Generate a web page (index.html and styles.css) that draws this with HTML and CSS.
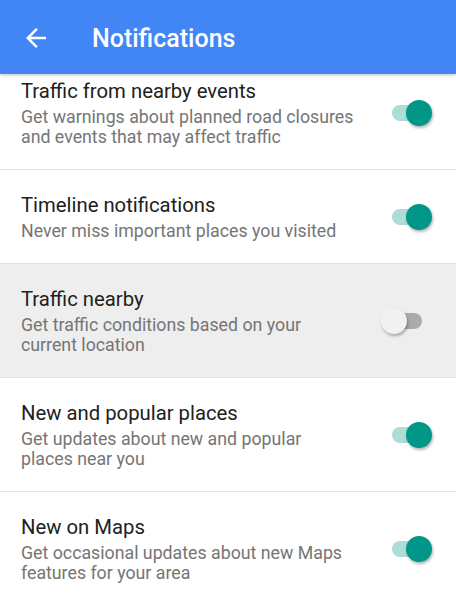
FILE: index.html
```html
<!DOCTYPE html>
<html>
<head>
<meta charset="utf-8">
<link rel="stylesheet" href="styles.css">
</head>
<body>
<header class="appbar">
  <svg class="back" viewBox="0 0 24 24" width="30" height="30"><path fill="#fff" d="M20 11H7.83l5.59-5.59L12 4l-8 8 8 8 1.41-1.41L7.83 13H20v-2z"/></svg>
  <h1 class="title">Notifications</h1>
</header>
<main class="list">
  <div class="row">
    <div class="text">
      <div class="name">Traffic from nearby events</div>
      <div class="desc">Get warnings about planned road closures and events that may affect traffic</div>
    </div>
    <div class="switch on"><span class="track"></span><span class="thumb"></span></div>
  </div>
  <div class="row">
    <div class="text">
      <div class="name">Timeline notifications</div>
      <div class="desc">Never miss important places you visited</div>
    </div>
    <div class="switch on"><span class="track"></span><span class="thumb"></span></div>
  </div>
  <div class="row pressed">
    <div class="text">
      <div class="name">Traffic nearby</div>
      <div class="desc">Get traffic conditions based on your current location</div>
    </div>
    <div class="switch off"><span class="track"></span><span class="thumb"></span></div>
  </div>
  <div class="row">
    <div class="text">
      <div class="name">New and popular places</div>
      <div class="desc">Get updates about new and popular places near you</div>
    </div>
    <div class="switch on"><span class="track"></span><span class="thumb"></span></div>
  </div>
  <div class="row">
    <div class="text">
      <div class="name">New on Maps</div>
      <div class="desc">Get occasional updates about new Maps features for your area</div>
    </div>
    <div class="switch on"><span class="track"></span><span class="thumb"></span></div>
  </div>
</main>
</body>
</html>
```
FILE: styles.css
```css
html, body {
  margin: 0;
  padding: 0;
  background: #ffffff;
  font-family: Roboto, "Noto Sans", sans-serif;
  overflow: hidden;
}
.appbar {
  position: relative;
  z-index: 2;
  height: 74px;
  background: #4285f4;
  display: flex;
  align-items: center;
  box-shadow: 0 1px 3px rgba(0,0,0,0.25);
}
.back {
  display: block;
  margin-left: 21px;
  margin-top: 1px;
}
.title {
  margin: 0 0 0 41px;
  color: #ffffff;
  font-size: 25px;
  font-weight: 500;
  line-height: 30px;
  margin-top: 3px;
}
.list {
  margin-top: -18px;
}
.row {
  display: flex;
  align-items: center;
  padding: 22px 24px 22px 21px;
  border-bottom: 1px solid #e2e2e2;
  background: #ffffff;
}
.row.pressed {
  background: #eeeeee;
}
.text {
  flex: 1;
  max-width: 334px;
}
.name {
  font-size: 20.3px;
  line-height: 26px;
  color: #212121;
}
.desc {
  margin-top: 3px;
  font-size: 17.75px;
  line-height: 20px;
  color: #757575;
}
.switch {
  position: relative;
  margin-left: auto;
  width: 51px;
  height: 26px;
  flex: none;
}
.track {
  position: absolute;
  left: 11px;
  top: 5px;
  width: 30px;
  height: 16px;
  border-radius: 8px;
}
.thumb {
  position: absolute;
  top: 0;
  width: 26px;
  height: 26px;
  border-radius: 50%;
  box-shadow: 1px 2px 3px rgba(0,0,0,0.3);
}
.switch.on .track { background: #aedcd6; }
.switch.on .thumb { right: 0; background: #009688; }
.switch.off .track { background: #ababab; }
.switch.off .thumb { left: 0; background: #f1f1f1; }
```
